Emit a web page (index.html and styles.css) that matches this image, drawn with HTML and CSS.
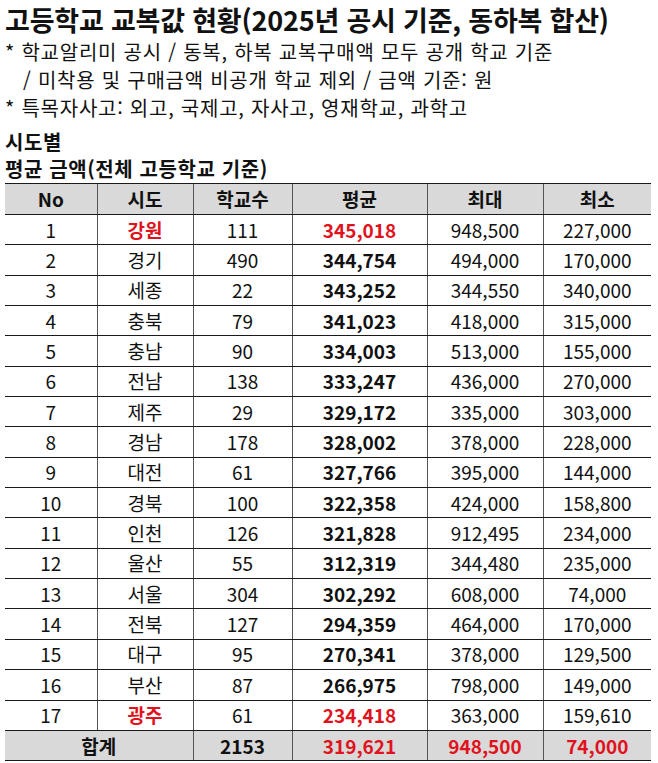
FILE: index.html
```html
<!DOCTYPE html>
<html lang="ko">
<head>
<meta charset="utf-8">
<link rel="stylesheet" href="styles.css">
</head>
<body>
<div class="page">
  <h1 class="title">고등학교 교복값 현황(2025년 공시 기준, 동하복 합산)</h1>
  <p class="note">* 학교알리미 공시 / 동복, 하복 교복구매액 모두 공개 학교 기준</p>
  <p class="note indent">/ 미착용 및 구매금액 비공개 학교 제외 / 금액 기준: 원</p>
  <p class="note">* 특목자사고: 외고, 국제고, 자사고, 영재학교, 과학고</p>
  <h2 class="sub first">시도별</h2>
  <h3 class="sub">평균 금액(전체 고등학교 기준)</h3>
  <table class="data">
    <colgroup>
      <col class="c1"><col class="c2"><col class="c3"><col class="c4"><col class="c5"><col class="c6">
    </colgroup>
    <thead>
      <tr><th>No</th><th>시도</th><th>학교수</th><th>평균</th><th>최대</th><th>최소</th></tr>
    </thead>
    <tbody>
      <tr><td>1</td><td class="red b">강원</td><td>111</td><td class="red b">345,018</td><td>948,500</td><td>227,000</td></tr>
      <tr><td>2</td><td>경기</td><td>490</td><td class="b">344,754</td><td>494,000</td><td>170,000</td></tr>
      <tr><td>3</td><td>세종</td><td>22</td><td class="b">343,252</td><td>344,550</td><td>340,000</td></tr>
      <tr><td>4</td><td>충북</td><td>79</td><td class="b">341,023</td><td>418,000</td><td>315,000</td></tr>
      <tr><td>5</td><td>충남</td><td>90</td><td class="b">334,003</td><td>513,000</td><td>155,000</td></tr>
      <tr><td>6</td><td>전남</td><td>138</td><td class="b">333,247</td><td>436,000</td><td>270,000</td></tr>
      <tr><td>7</td><td>제주</td><td>29</td><td class="b">329,172</td><td>335,000</td><td>303,000</td></tr>
      <tr><td>8</td><td>경남</td><td>178</td><td class="b">328,002</td><td>378,000</td><td>228,000</td></tr>
      <tr><td>9</td><td>대전</td><td>61</td><td class="b">327,766</td><td>395,000</td><td>144,000</td></tr>
      <tr><td>10</td><td>경북</td><td>100</td><td class="b">322,358</td><td>424,000</td><td>158,800</td></tr>
      <tr><td>11</td><td>인천</td><td>126</td><td class="b">321,828</td><td>912,495</td><td>234,000</td></tr>
      <tr><td>12</td><td>울산</td><td>55</td><td class="b">312,319</td><td>344,480</td><td>235,000</td></tr>
      <tr><td>13</td><td>서울</td><td>304</td><td class="b">302,292</td><td>608,000</td><td>74,000</td></tr>
      <tr><td>14</td><td>전북</td><td>127</td><td class="b">294,359</td><td>464,000</td><td>170,000</td></tr>
      <tr><td>15</td><td>대구</td><td>95</td><td class="b">270,341</td><td>378,000</td><td>129,500</td></tr>
      <tr><td>16</td><td>부산</td><td>87</td><td class="b">266,975</td><td>798,000</td><td>149,000</td></tr>
      <tr><td>17</td><td class="red b">광주</td><td>61</td><td class="red b">234,418</td><td>363,000</td><td>159,610</td></tr>
    </tbody>
    <tfoot>
      <tr><td colspan="2" class="b">합계</td><td class="b">2153</td><td class="red b">319,621</td><td class="red b">948,500</td><td class="red b">74,000</td></tr>
    </tfoot>
  </table>
</div>
</body>
</html>
```

FILE: styles.css
```css
html, body {
  margin: 0;
  padding: 0;
  background: #ffffff;
}
body {
  font-family: "Noto Sans CJK KR", "Noto Sans", sans-serif;
  color: #111111;
}
.page {
  padding: 2px 0 0 5px;
}
.title {
  margin: 0;
  font-size: 27px;
  line-height: 36px;
  font-weight: 700;
  letter-spacing: -0.2px;
}
.note {
  margin: 0;
  font-size: 20px;
  line-height: 28px;
  letter-spacing: 0.75px;
}
.indent {
  padding-left: 18px;
}
.sub {
  margin: 0;
  font-size: 20px;
  line-height: 27px;
  font-weight: 700;
  letter-spacing: 0.6px;
}
.sub.first {
  margin-top: 5.5px;
}
.data {
  margin-top: 1.5px;
  border-collapse: collapse;
  table-layout: fixed;
  width: 646px;
  font-size: 19px;
}
.c1 { width: 92px; }
.c2 { width: 96px; }
.c3 { width: 99px; }
.c4 { width: 135px; }
.c5 { width: 116px; }
.c6 { width: 108px; }
.data th, .data td {
  height: 29.35px;
  padding: 0;
  text-align: center;
  vertical-align: middle;
  border-top: 1px solid #1a1a1a;
  border-bottom: 1px solid #1a1a1a;
  border-left: 1px solid #555555;
  line-height: 20px;
}
.data th:first-child, .data td:first-child {
  border-left: none;
}
.data th {
  background: #d9d9d9;
  font-weight: 700;
  height: 30px;
}
.data tfoot td {
  background: #d9d9d9;
}
.b { font-weight: 700; }
.red { color: #e0131d; }
```
